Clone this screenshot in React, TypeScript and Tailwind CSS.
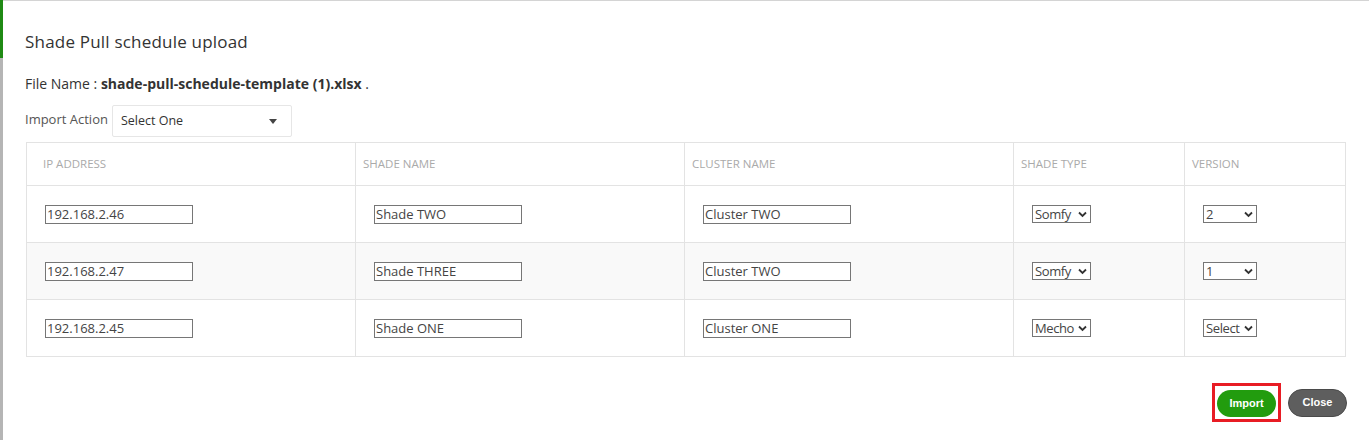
const rows = [
  { ip: "192.168.2.46", shade: "Shade TWO", cluster: "Cluster TWO", type: "Somfy", version: "2" },
  { ip: "192.168.2.47", shade: "Shade THREE", cluster: "Cluster TWO", type: "Somfy", version: "1" },
  { ip: "192.168.2.45", shade: "Shade ONE", cluster: "Cluster ONE", type: "Mecho", version: "Select" },
];

function Chevron() {
  return (
    <svg width="9" height="7" viewBox="0 0 9 7" className="shrink-0">
      <path d="M1 1.5 L4.5 5 L8 1.5" fill="none" stroke="#333" strokeWidth="1.8" />
    </svg>
  );
}

function FakeSelect({ value, width }: { value: string; width: string }) {
  return (
    <div className={`${width} h-[18px] border border-[#767676] flex items-center justify-between pl-[2px] pr-[3px] text-[13px] text-[#444] tracking-[-0.4px] bg-white`}>
      <span className="leading-none">{value}</span>
      <Chevron />
    </div>
  );
}

function TextBox({ value }: { value: string }) {
  return (
    <div className="w-[148px] h-[19px] border border-[#767676] flex items-center pl-[1px] text-[13px] text-[#444] bg-white leading-none">
      {value}
    </div>
  );
}

export default function App() {
  return (
    <div className="flex w-full h-[440px] bg-white" style={{ fontFamily: '"Open Sans", "Noto Sans", sans-serif' }}>
      <div className="w-[3px] flex flex-col">
        <div className="h-[58px] bg-[#1f8a14]" />
        <div className="flex-1 bg-[#b5b5b5]" />
      </div>
      <div className="flex-1 border-t border-[#d4d4d4] pl-[22px] pr-[22px]">
        <h1 className="mt-[30px] text-[17px] text-[#333] tracking-[0.2px] leading-[22px]">Shade Pull schedule upload</h1>
        <p className="mt-[22px] text-[14px] text-[#333] leading-[18px]">
          File Name : <span className="font-bold">shade-pull-schedule-template (1).xlsx</span> .
        </p>
        <div className="mt-[12px] flex items-start">
          <span className="text-[13px] text-[#555] leading-[18px] mt-[5px] mr-[4px]">Import Action</span>
          <div className="w-[180px] h-[32px] border border-[#e6e6e6] rounded-[2px] flex items-center justify-between pl-[8px] pr-[14px] text-[12.5px] text-[#333]">
            <span>Select One</span>
            <svg width="8" height="5" viewBox="0 0 8 5">
              <path d="M0 0 L8 0 L4 5 Z" fill="#444" />
            </svg>
          </div>
        </div>
        <table className="mt-[5px] ml-[1px] w-[1320px] border-collapse border border-[#e3e3e3] table-fixed">
          <thead>
            <tr className="h-[43px]">
              <th className="w-[329px] border border-[#e3e3e3] text-left pl-[16px] text-[11.5px] font-normal text-[#aaa]">IP ADDRESS</th>
              <th className="w-[329px] border border-[#e3e3e3] text-left pl-[7px] text-[11.5px] font-normal text-[#aaa]">SHADE NAME</th>
              <th className="w-[329px] border border-[#e3e3e3] text-left pl-[7px] text-[11.5px] font-normal text-[#aaa]">CLUSTER NAME</th>
              <th className="w-[171px] border border-[#e3e3e3] text-left pl-[7px] text-[11.5px] font-normal text-[#aaa]">SHADE TYPE</th>
              <th className="border border-[#e3e3e3] text-left pl-[7px] text-[11.5px] font-normal text-[#aaa]">VERSION</th>
            </tr>
          </thead>
          <tbody>
            {rows.map((r, i) => (
              <tr key={i} className={`h-[57px] ${i === 1 ? "bg-[#f9f9f9]" : "bg-white"}`}>
                <td className="border border-[#e3e3e3] pl-[18px]"><TextBox value={r.ip} /></td>
                <td className="border border-[#e3e3e3] pl-[18px]"><TextBox value={r.shade} /></td>
                <td className="border border-[#e3e3e3] pl-[18px]"><TextBox value={r.cluster} /></td>
                <td className="border border-[#e3e3e3] pl-[18px]"><FakeSelect value={r.type} width="w-[59px]" /></td>
                <td className="border border-[#e3e3e3] pl-[18px]"><FakeSelect value={r.version} width="w-[54px]" /></td>
              </tr>
            ))}
          </tbody>
        </table>
        <div className="mt-[26px] flex justify-end items-center gap-[7px]">
          <div className="border-[3px] border-[#e81c24] px-[2px] pt-[4px] pb-[2px] bg-white">
            <button className="block w-[59px] h-[27px] rounded-full bg-[#229c0e] text-white text-[11px] font-bold" style={{ fontFamily: '"Liberation Sans", Arial, sans-serif' }}>
              Import
            </button>
          </div>
          <button className="w-[59px] h-[28px] rounded-full bg-[#5e5e5e] border border-[#4a4a4a] text-white text-[11px] font-bold" style={{ fontFamily: '"Liberation Sans", Arial, sans-serif' }}>
            Close
          </button>
        </div>
      </div>
    </div>
  );
}
